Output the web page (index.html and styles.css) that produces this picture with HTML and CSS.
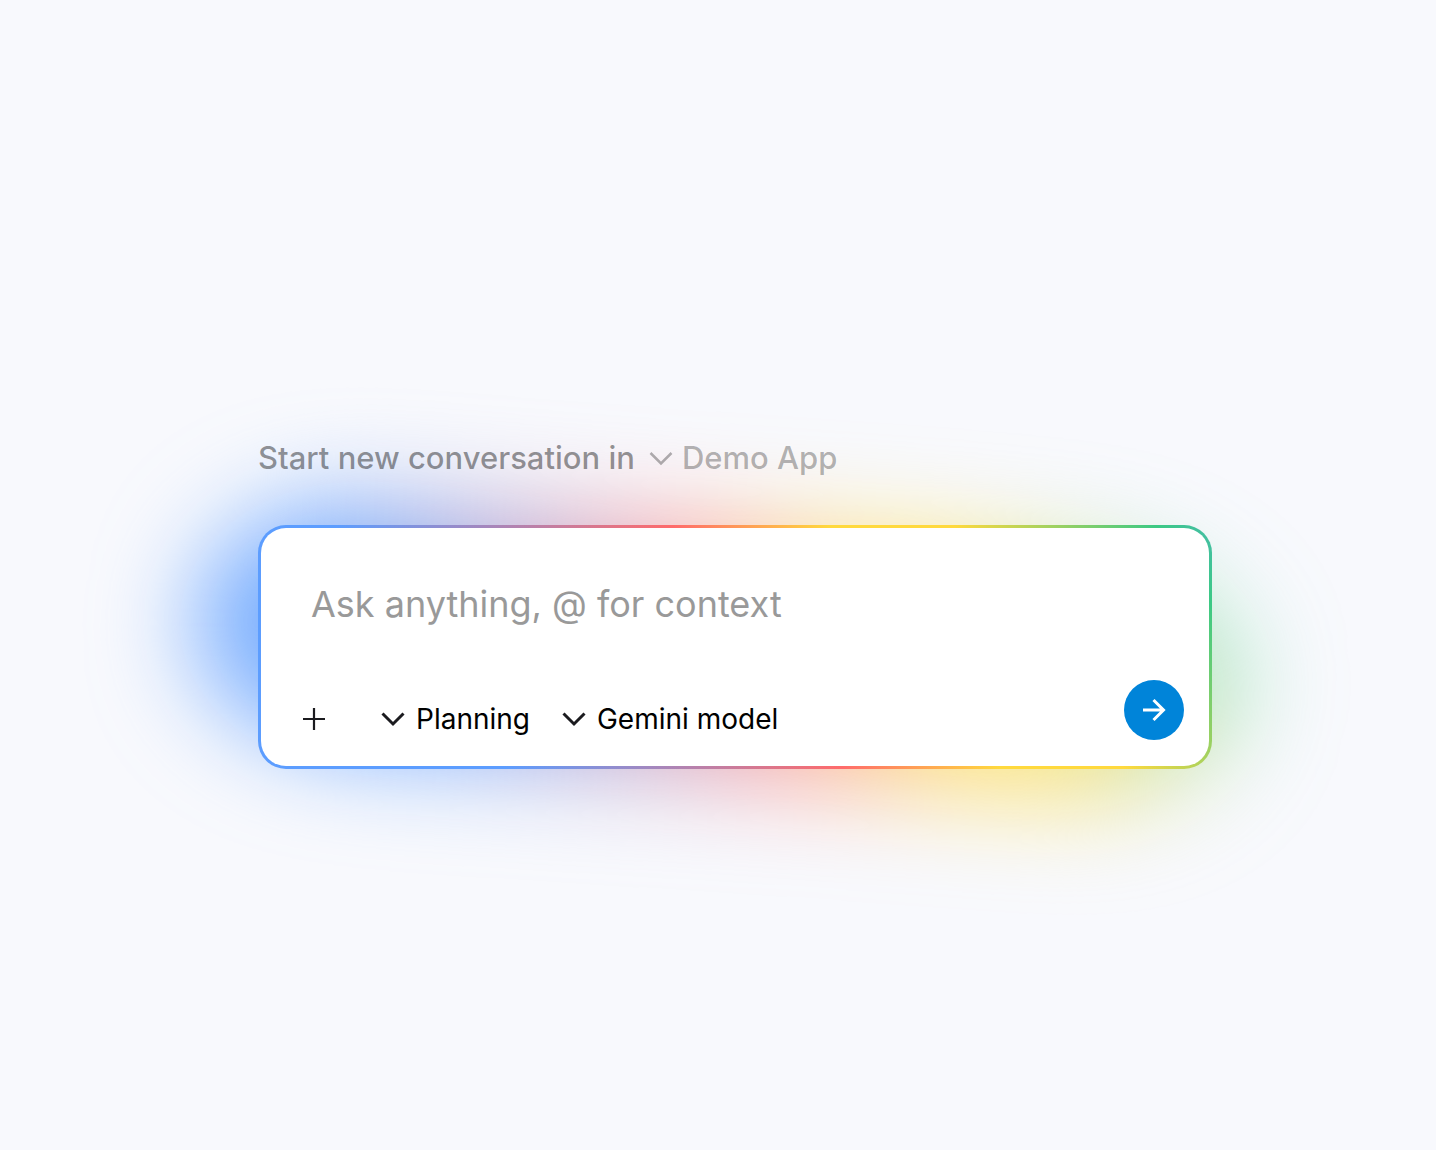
FILE: index.html
```html
<!DOCTYPE html>
<html lang="en">
<head>
<meta charset="utf-8">
<meta name="viewport" content="width=device-width, initial-scale=1">
<title>New conversation</title>
<link rel="stylesheet" href="styles.css">
</head>
<body>
<main class="page">
  <form class="composer">
    <div class="heading">
      <h1 class="title">Start new conversation in</h1>
      <label class="picker picker-app">
        <svg class="chevron chevron-light" viewBox="0 0 24 24" aria-hidden="true"><path d="M1.500 8 12 18.500 22.500 8"/></svg>
        <select class="select" aria-label="Workspace"><option>Demo App</option></select>
      </label>
    </div>
    <div class="card-wrap">
      <div class="glow"></div>
      <div class="card">
        <input class="prompt" type="text" aria-label="Message" placeholder="Ask anything, @ for context">
        <div class="toolbar">
          <button class="add" type="button" aria-label="Add">
            <svg class="plus" viewBox="0 0 24 24" aria-hidden="true"><path d="M12 1v22M1 12h22"/></svg>
          </button>
          <label class="picker">
            <svg class="chevron" viewBox="0 0 24 24" aria-hidden="true"><path d="M1.500 6.500 12 17 22.500 6.500"/></svg>
            <select class="select" aria-label="Mode"><option>Planning</option></select>
          </label>
          <label class="picker">
            <svg class="chevron" viewBox="0 0 24 24" aria-hidden="true"><path d="M1.500 6.500 12 17 22.500 6.500"/></svg>
            <select class="select" aria-label="Model"><option>Gemini model</option></select>
          </label>
          <button class="send" type="submit" aria-label="Send">
            <svg class="arrow" viewBox="0 0 24 24" aria-hidden="true"><path d="M1 12h20M11.500 2l10 10-10 10"/></svg>
          </button>
        </div>
      </div>
    </div>
  </form>
</main>
</body>
</html>
```

FILE: styles.css
```css
* { box-sizing: border-box; }

body {
  margin: 0;
  background: #f8f9fd;
  color: #000;
  font-family: Inter, "Liberation Sans", sans-serif;
}

.page {
  min-height: 100vh;
  padding: 437px 224px 80px 258px;
  overflow: hidden;
}

.heading {
  position: relative;
  z-index: 1;
  display: flex;
  align-items: center;
  gap: 14px;
  height: 40px;
  margin-bottom: 48px;
  font-size: 31px;
  font-weight: 500;
}

.title {
  margin: 0;
  color: rgba(0, 0, 0, 0.42);
  font: inherit;
}

.card-wrap { position: relative; }

/* soft colour haze spreading from behind the card */
.glow {
  position: absolute;
  inset: 4px -34px -6px -64px;
  border-radius: 170px / 125px;
  background: linear-gradient(56deg, #5c9dffd8 22%, #ff6b6b9c 51%, #ffd93dac 65%, #ffd93dac 74%, #3cc98468 91%, #3cc98460);
  filter: blur(50px);
  transform: rotate(4deg);
}

.card {
  position: relative;
  padding: 46px 25px 26px 40px;
  border: 3px solid transparent;
  border-radius: 28px;
  background:
    linear-gradient(#fff, #fff) padding-box,
    linear-gradient(55deg, #5c9dff 22%, #ff6b6b 52%, #ffd93d 66%, #ffd93d 77%, #3cc984 95%, #45bda8) border-box;
}

.prompt {
  display: block;
  width: 100%;
  height: 60px;
  padding: 0 10px;
  border: 0;
  outline: 0;
  background: none;
  color: #000;
  font: 400 36px/60px Inter, "Liberation Sans", sans-serif;
}

.prompt::placeholder {
  color: #999;
  opacity: 1;
}

.toolbar {
  display: flex;
  align-items: flex-end;
  gap: 32px;
  margin-top: 46px;
}

.add {
  display: flex;
  align-items: center;
  justify-content: center;
  width: 48px;
  height: 42px;
  padding: 0 22px 0 0;
  border: 0;
  background: none;
}

.picker {
  display: flex;
  align-items: center;
  gap: 11px;
  height: 42px;
  font-size: 28px;
}

.picker-app {
  gap: 9px;
  color: rgba(0, 0, 0, 0.3);
  font-size: 31px;
}

.select {
  appearance: none;
  field-sizing: content;
  padding: 0;
  border: 0;
  background: none;
  color: inherit;
  font: inherit;
}

.chevron,
.plus,
.arrow {
  flex: none;
  width: 24px;
  height: 24px;
  fill: none;
  stroke: #1b1b1f;
  stroke-width: 3;
}

.chevron-light {
  stroke: rgba(0, 0, 0, 0.3);
  stroke-width: 2.5;
}

.plus { stroke-width: 2.2; }

.send {
  display: flex;
  align-items: center;
  justify-content: center;
  width: 60px;
  height: 60px;
  margin-left: auto;
  padding: 0;
  border: 0;
  border-radius: 50%;
  background: #0084d9;
}

.arrow { stroke: #fff; }
```
